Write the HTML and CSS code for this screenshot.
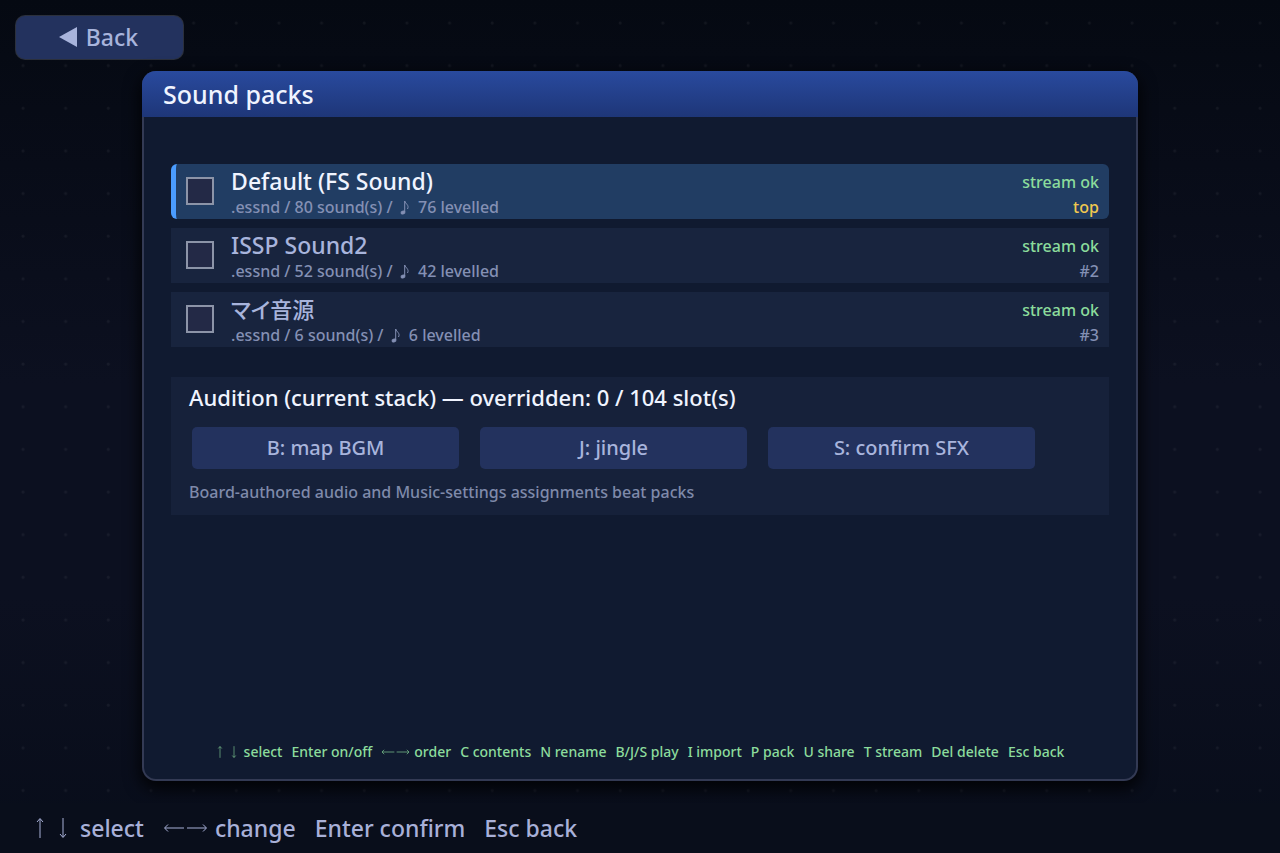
FILE: index.html
```html
<!DOCTYPE html>
<html lang="en">
<head>
  <meta charset="UTF-8">
  <meta name="viewport" content="width=device-width, initial-scale=1.0">
  <title>Sound packs</title>
  <link rel="stylesheet" href="styles.css">
</head>
<body>
  <svg class="symbols" aria-hidden="true">
    <symbol id="arrow-up" viewBox="0 0 12 24"><path d="M6 22V3M3 6L6 2.500L9 6"/></symbol>
    <symbol id="arrow-down" viewBox="0 0 12 24"><path d="M6 2V21M3 18L6 21.500L9 18"/></symbol>
    <symbol id="arrow-left" viewBox="0 0 22 24"><path d="M21 12H2M5 8.500L1.500 12L5 15.500"/></symbol>
    <symbol id="arrow-right" viewBox="0 0 22 24"><path d="M1 12H20M17 8.500L20.500 12L17 15.500"/></symbol>
    <symbol id="note" viewBox="0 0 12 18"><ellipse cx="4" cy="13.500" rx="2" ry="1.400" transform="rotate(-20 4 13.500)"/><path d="M5.700 13V2C6.500 5 10.500 6 8.500 10"/></symbol>
  </svg>

  <header class="topbar">
    <button type="button" class="back-btn">
      <svg class="back-icon" viewBox="0 0 18 20" aria-hidden="true"><path d="M0 10L18 0V20Z"/></svg>
      Back
    </button>
  </header>

  <main class="panel">
    <h1 class="panel-title">Sound packs</h1>
    <div class="panel-body">
      <ul class="packs">
        <li class="pack selected">
          <input type="checkbox" id="pack1" class="check">
          <label for="pack1" class="pack-info">
            <span class="pack-name">Default (FS Sound)</span>
            <span class="pack-meta">.essnd / 80 sound(s) / <svg class="note"><use href="#note"/></svg> 76 levelled</span>
          </label>
          <div class="pack-status"><span class="ok">stream ok</span><span class="rank top">top</span></div>
        </li>
        <li class="pack">
          <input type="checkbox" id="pack2" class="check">
          <label for="pack2" class="pack-info">
            <span class="pack-name">ISSP Sound2</span>
            <span class="pack-meta">.essnd / 52 sound(s) / <svg class="note"><use href="#note"/></svg> 42 levelled</span>
          </label>
          <div class="pack-status"><span class="ok">stream ok</span><span class="rank">#2</span></div>
        </li>
        <li class="pack">
          <input type="checkbox" id="pack3" class="check">
          <label for="pack3" class="pack-info">
            <span class="pack-name ja" lang="ja">マイ音源</span>
            <span class="pack-meta">.essnd / 6 sound(s) / <svg class="note"><use href="#note"/></svg> 6 levelled</span>
          </label>
          <div class="pack-status"><span class="ok">stream ok</span><span class="rank">#3</span></div>
        </li>
      </ul>

      <section class="audition">
        <h2>Audition (current stack) — overridden: 0 / 104 slot(s)</h2>
        <div class="audition-buttons">
          <button type="button">B: map BGM</button>
          <button type="button">J: jingle</button>
          <button type="button">S: confirm SFX</button>
        </div>
        <p>Board-authored audio and Music-settings assignments beat packs</p>
      </section>

      <div class="keys">
        <span class="key"><svg class="v"><use href="#arrow-up"/></svg><svg class="v"><use href="#arrow-down"/></svg>select</span>
        <span>Enter on/off</span>
        <span class="key"><svg class="h"><use href="#arrow-left"/></svg><svg class="h last"><use href="#arrow-right"/></svg>order</span>
        <span>C contents</span>
        <span>N rename</span>
        <span>B/J/S play</span>
        <span>I import</span>
        <span>P pack</span>
        <span>U share</span>
        <span>T stream</span>
        <span>Del delete</span>
        <span>Esc back</span>
      </div>
    </div>
  </main>

  <footer class="footer">
    <span class="key"><svg class="v"><use href="#arrow-up"/></svg><svg class="v"><use href="#arrow-down"/></svg>select</span>
    <span class="key"><svg class="h"><use href="#arrow-left"/></svg><svg class="h last"><use href="#arrow-right"/></svg>change</span>
    <span>Enter confirm</span>
    <span>Esc back</span>
  </footer>
</body>
</html>
```
FILE: styles.css
```css
* {
  box-sizing: border-box;
}

body {
  margin: 0;
  min-height: 100vh;
  display: flex;
  flex-direction: column;
  font-family: "Noto Sans", "Noto Sans CJK JP", sans-serif;
  font-weight: 500;
  color: #a8b4dc;
  background:
    radial-gradient(circle at 23px 23px, rgba(255, 255, 255, 0.05) 1px, transparent 2px) 0 0 / calc(100% / 30) calc(100vh / 20),
    linear-gradient(#050912, #0c1020 45%, #0c1020 70%, #080d1a);
}

h1, h2, p, ul {
  margin: 0;
  padding: 0;
  font-weight: 500;
}

button {
  font: inherit;
  color: inherit;
  border: none;
  background: #23325e;
  cursor: pointer;
}

.symbols {
  display: none;
}

.topbar {
  padding: 16px 16px 12px;
}

.back-btn {
  display: flex;
  align-items: center;
  justify-content: center;
  gap: 9px;
  width: 167px;
  height: 43px;
  padding: 0 2px 2px 0;
  border-radius: 9px;
  font-size: 23px;
  box-shadow: 0 0 0 1px #2b303c;
}

.back-icon {
  width: 18px;
  height: 20px;
  fill: #a8b4dc;
}

/* main panel */
.panel {
  flex: 1;
  display: flex;
  flex-direction: column;
  margin: 0 11.1%;
  border-radius: 14px;
  background: #101a30;
  border: 2px solid #333a54;
  border-top: none;
  box-shadow: 0 6px 16px 2px rgba(0, 0, 0, 0.8);
}

.panel-title {
  margin: 0 -2px;
  padding-left: 21px;
  border-radius: 14px 14px 0 0;
  background: linear-gradient(#294a9e, #1e3678);
  color: #f0f4ff;
  font-size: 25px;
  line-height: 46px;
}

.panel-body {
  flex: 1;
  display: flex;
  flex-direction: column;
  padding: 47px 27px 15px;
}

.packs {
  display: flex;
  flex-direction: column;
  gap: 9px;
  list-style: none;
}

.pack {
  display: flex;
  height: 55px;
  padding: 4px 10px 0 15px;
  background: #18243e;
}

.pack.selected {
  padding-left: 10px;
  border-left: 5px solid #4a9cff;
  border-radius: 6px;
  background: #213d63;
}

.check {
  appearance: none;
  width: 28px;
  height: 28px;
  margin: 9px 17px 0 0;
  border: 2px solid #8c94a8;
  background: #232946;
}

.check:checked {
  background: #4a9cff;
}

.pack-info {
  flex: 1;
}

.pack-name,
.pack-meta,
.pack-status span {
  display: block;
}

.pack-name {
  font-size: 23px;
  line-height: 26px;
}

.pack-name.ja {
  font-size: 22px;
  font-feature-settings: "palt";
}

.selected .pack-name {
  color: #f0f4ff;
}

.pack-meta {
  font-size: 16px;
  line-height: 26px;
  color: #8490b4;
}

.note {
  width: 12px;
  height: 18px;
  margin: 0 3px 0 2px;
  vertical-align: -4px;
  fill: currentColor;
  stroke: currentColor;
}

#note path {
  fill: none;
}

.pack-status {
  font-size: 16px;
  text-align: right;
}

.ok {
  line-height: 28px;
  color: #8cdc9c;
}

.rank {
  line-height: 22px;
  color: #8490b4;
}

.rank.top {
  color: #f0c850;
}

/* audition box */
.audition {
  margin-top: 30px;
  padding: 5px 18px 12px;
  background: #16213a;
}

.audition h2 {
  color: #f0f4ff;
  font-size: 22px;
  line-height: 30px;
}

.audition-buttons {
  display: grid;
  grid-template-columns: repeat(3, 1fr);
  gap: 21px;
  margin: 15px 56px 12px 3px;
}

.audition-buttons button {
  height: 42px;
  padding-bottom: 3px;
  border-radius: 5px;
  font-size: 20px;
}

.audition p {
  font-size: 16px;
  line-height: 22px;
  color: #7f8aaa;
}

/* key hints */
.key {
  display: flex;
  align-items: center;
}

.key svg {
  fill: none;
  stroke: currentColor;
}

.keys {
  display: flex;
  justify-content: center;
  gap: 9px;
  margin-top: auto;
  font-size: 14px;
  line-height: 24px;
  color: #8cdc9c;
  white-space: nowrap;
}

.keys .v {
  width: 8px;
  height: 14px;
  margin-right: 6px;
}

.keys .h {
  width: 14px;
  height: 16px;
  margin-right: 1px;
}

.keys .last {
  margin-right: 4px;
}

.footer {
  display: flex;
  gap: 19px;
  margin-top: 22px;
  padding: 8px 34px;
  font-size: 23px;
  line-height: 34px;
  color: #a8b0d8;
  background: #090e1b;
}

.footer .v {
  width: 12px;
  height: 24px;
  margin-right: 11px;
}

.footer .h {
  width: 22px;
  height: 24px;
  margin-right: 1px;
}

.footer .last {
  margin-right: 7px;
}
```
